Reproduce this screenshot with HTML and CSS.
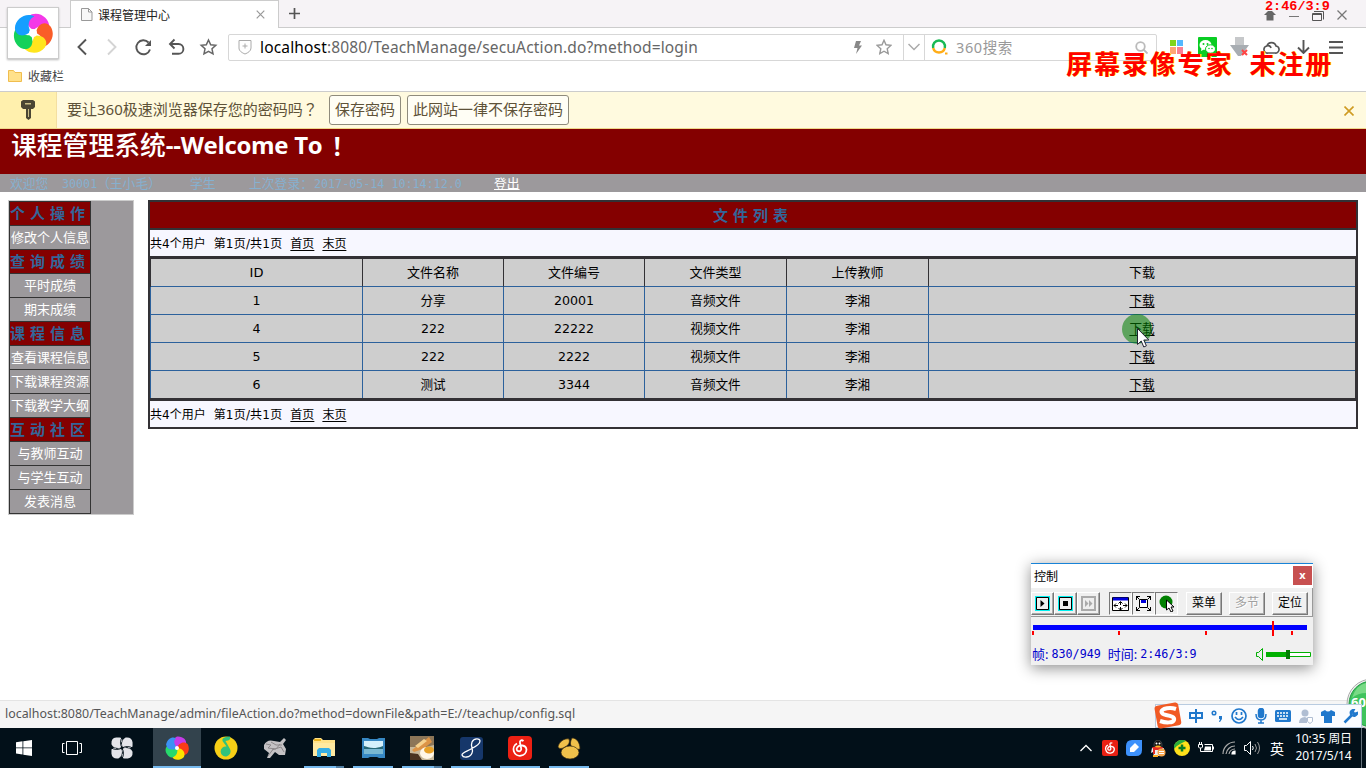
FILE: index.html
```html
<!DOCTYPE html>
<html lang="zh-CN">
<head>
<meta charset="utf-8">
<title>课程管理中心</title>
<link rel="stylesheet" href="styles.css">
</head>
<body>
<div class="screen">
  <header class="tabs">
    <div class="tab">
      <svg width="12" height="13" viewBox="0 0 12 13" fill="#f8f8f8" stroke="#999"><path d="M.5.5h7l3.500 3.500v8.500h-10.500zM7.500.5v3.500h3.500"/></svg>
      <span class="tab-title">课程管理中心</span>
      <svg width="9" height="9" viewBox="0 0 9 9" stroke="#999" stroke-width="1.200"><path d="M.7.7l7.600 7.600M8.300.7L.7 8.300"/></svg>
    </div>
    <svg class="new-tab" width="11" height="11" viewBox="0 0 11 11" stroke="#555" stroke-width="1.700"><path d="M5.500 0v11M0 5.500h11"/></svg>
    <div class="win-buttons">
      <svg width="12" height="11" viewBox="0 0 12 11" fill="#666"><path d="M4 1h4l4 4H9.500v5.500h-7V5H0z"/></svg>
      <svg width="10" height="11" viewBox="0 0 10 11" stroke="#777"><path d="M0 6.500h10"/></svg>
      <svg width="12" height="11" viewBox="0 0 12 11" fill="none" stroke="#555"><path d="M.5 3.500h9v7h-9zM.5 4.500h9M2 1.500h9.500v8"/></svg>
      <svg width="10" height="10" viewBox="0 0 10 10" stroke="#777" stroke-width="1.300"><path d="M.5.5l9 9M9.500.5l-9 9"/></svg>
    </div>
  </header>

  <div class="toolbar">
    <div class="nav">
      <svg width="29" height="20" viewBox="0 0 29 20" fill="none" stroke="#555" stroke-width="1.900"><path d="M18 2.500L10.500 10l7.500 7.500"/></svg>
      <svg width="30" height="20" viewBox="0 0 30 20" fill="none" stroke="#d4d4d4" stroke-width="1.900"><path d="M11 2.500l7.500 7.500-7.500 7.500"/></svg>
      <svg width="33" height="20" viewBox="0 0 33 20" fill="none" stroke="#555" stroke-width="1.900"><path d="M21.500 5.500a7 7 0 1 0 1.500 7"/><path d="M24 3v6h-6z" fill="#555" stroke="none"/></svg>
      <svg width="33" height="20" viewBox="0 0 33 20" fill="none" stroke="#555" stroke-width="1.900"><path d="M10 7h8.500a4.700 4.700 0 0 1 0 9.800H12M14.500 2.500L10 7l4.500 4.500"/></svg>
      <svg width="30" height="20" viewBox="0 0 30 20" fill="none" stroke="#666" stroke-width="1.500"><path d="M15.500 3l2.200 4.700 5.100.6-3.800 3.500 1 5-4.500-2.500-4.500 2.500 1-5-3.800-3.500 5.100-.6z"/></svg>
    </div>
    <div class="address">
      <svg width="14" height="16" viewBox="0 0 14 16" fill="none" stroke="#aaa"><path d="M1 1.500h12V9c0 3-3 4.800-6 6-3-1.200-6-3-6-6zM7 4.500v5M4.500 7h5"/></svg>
      <span class="url">localhost<i>:8080/TeachManage/secuAction.do?method=login</i></span>
      <svg class="bolt" width="8" height="13" viewBox="0 0 8 13" fill="#888"><path d="M2 0h5L5 4.500h3L2 13l1.500-6H0z"/></svg>
      <svg class="fav" width="16" height="16" viewBox="0 0 16 16" fill="none" stroke="#999" stroke-width="1.400"><path d="M8 1.300l2 4.500 4.900.6-3.700 3.300 1 4.900L8 12.200l-4.200 2.400 1-4.900L1.100 6.400 6 5.800z"/></svg>
      <div class="drop"><svg width="12" height="8" viewBox="0 0 12 8" fill="none" stroke="#aaa" stroke-width="1.500"><path d="M.5 1L6 6.500 11.500 1"/></svg></div>
      <svg width="17" height="16" viewBox="0 0 17 16" fill="none" stroke-width="2.500"><path d="M2.200 9A6 6 0 1 1 13.800 9" stroke="#19b955"/><path d="M2.200 9a6 6 0 0 0 11.600 0" stroke="#ffad18"/><path d="M14 14.500h2.500" stroke="#ffad18" stroke-width="2"/></svg>
      <span class="search">360搜索</span>
      <svg width="13" height="13" viewBox="0 0 13 13" fill="none" stroke="#bbb" stroke-width="1.800"><circle cx="5.500" cy="5.500" r="4.300"/><path d="M8.500 8.500l4 4"/></svg>
    </div>
    <div class="extensions">
      <svg width="13" height="14" viewBox="0 0 13 14"><path fill="#80d51d" d="M0 0h6v6H0z"/><path fill="#55b8ff" d="M7 0h6v6H7z"/><path fill="#ffa573" d="M0 7h6v7H0z"/><path fill="#fa7f92" d="M7 7h6v7H7z"/></svg>
      <svg width="19" height="20" viewBox="0 0 19 20"><rect width="19" height="20" rx="1" fill="#09cd23"/><ellipse cx="7.500" cy="8" rx="6" ry="5" fill="#fff"/><path d="M3.500 11l-.5 3 3-1.500z" fill="#fff"/><ellipse cx="12.500" cy="12" rx="5" ry="4.200" fill="#fff" stroke="#09cd23"/><g fill="#09cd23"><circle cx="5.500" cy="7" r="1"/><circle cx="9.500" cy="7" r="1"/><circle cx="11" cy="11.500" r=".8"/><circle cx="14" cy="11.500" r=".8"/></g></svg>
      <svg width="20" height="20" viewBox="0 0 20 20"><path d="M5 0h9v8h5l-8 11h-3L0 8h5z" fill="#a8adb2"/><path d="M5 0h9v8H5z" fill="#c6c8ca"/><path d="M12 13l5 5m0-5l-5 5" stroke="#f44" stroke-width="2"/></svg>
      <svg width="17" height="14" viewBox="0 0 17 14" fill="none" stroke="#555" stroke-width="1.700"><path d="M5 13a3.500 3.500 0 0 1-1-7 4.700 4.700 0 0 1 9 0 3.500 3.500 0 0 1-1 7zM3.500 6c2-1 4 0 4.500 2"/></svg>
      <svg width="13" height="14" viewBox="0 0 13 14" fill="none" stroke="#555" stroke-width="1.900"><path d="M6.500 0v13M1 7.500L6.500 13 12 7.500"/></svg>
      <svg width="14" height="14" viewBox="0 0 14 14" stroke="#555" stroke-width="2"><path d="M0 2h14M0 7.500h14M0 13h14"/></svg>
    </div>
  </div>

  <div class="bookmarks">
    <svg width="14" height="12" viewBox="0 0 14 12" fill="#ffe18b" stroke="#f0bd4e"><path d="M.5.5h5l1.500 2h6.500v9H.5z"/></svg>
    <span>收藏栏</span>
  </div>

  <div class="password-bar">
    <div class="key"><svg width="14" height="20" viewBox="0 0 14 20" fill="#4a4634"><path d="M2 0h10l2 1.500v5.500l-2 2H10v9l-2.500 2L5 18V9H2L0 7V1.500z"/><path d="M4 3h6v1.500H4zM7 9h1v8H7z" fill="#c9bd86"/></svg></div>
    <span class="question">要让360极速浏览器保存您的密码吗<i class="mid" lang="zh-TW">？</i></span>
    <span class="pw-button save">保存密码</span>
    <span class="pw-button never">此网站一律不保存密码</span>
    <svg class="dismiss" width="10" height="10" viewBox="0 0 10 10" stroke="#cf9b22" stroke-width="1.600"><path d="M.5.5l9 9M9.500.5l-9 9"/></svg>
  </div>

  <div class="banner"><span>课程管理系统</span><b>--Welcome To</b><b class="mid" lang="zh-TW">！</b></div>
  <div class="user-bar">
    <span class="hello">欢迎您</span><span class="user-id">30001</span><span class="user-name">（王小毛）</span><span class="role">学生</span><span class="last">上次登录：</span><span class="time">2017-05-14 10:14:12.0</span><a>登出</a>
  </div>

  <main class="content">
    <aside class="sidebar">
      <ul class="menu">
        <li class="group">个人操作</li>
        <li>修改个人信息</li>
        <li class="group">查询成绩</li>
        <li>平时成绩</li>
        <li>期末成绩</li>
        <li class="group">课程信息</li>
        <li>查看课程信息</li>
        <li>下载课程资源</li>
        <li>下载教学大纲</li>
        <li class="group">互动社区</li>
        <li>与教师互动</li>
        <li>与学生互动</li>
        <li>发表消息</li>
      </ul>
    </aside>
    <section class="files">
      <h2>文件列表</h2>
      <div class="pager"><span>共4个用户</span><span class="pages">第1页/共1页</span><a>首页</a><a>末页</a></div>
      <div class="grid">
        <div class="row head"><span>ID</span><span>文件名称</span><span>文件编号</span><span>文件类型</span><span>上传教师</span><span>下载</span></div>
        <div class="row"><span>1</span><span>分享</span><span>20001</span><span>音频文件</span><span>李湘</span><span><a>下载</a></span></div>
        <div class="row"><span>4</span><span>222</span><span>22222</span><span>视频文件</span><span>李湘</span><span><a>下载</a></span></div>
        <div class="row"><span>5</span><span>222</span><span>2222</span><span>视频文件</span><span>李湘</span><span><a>下载</a></span></div>
        <div class="row"><span>6</span><span>测试</span><span>3344</span><span>音频文件</span><span>李湘</span><span><a>下载</a></span></div>
      </div>
      <div class="pager"><span>共4个用户</span><span class="pages">第1页/共1页</span><a>首页</a><a>末页</a></div>
    </section>
  </main>

  <div class="status">localhost:8080/TeachManage/admin/fileAction.do?method=downFile&amp;path=E://teachup/config.sql</div>

  <footer class="taskbar">
    <div class="apps">
      <div class="app"><svg width="16" height="16" viewBox="0 0 16 16" fill="#fff"><path d="M0 2.200l6.500-.9v6.200H0zM7.300 1.200L16 0v7.500H7.300zM0 8.300h6.500v6.200L0 13.600zM7.300 8.300H16V16l-8.700-1.200z"/></svg></div>
      <div class="app view"><svg width="20" height="14" viewBox="0 0 20 14" fill="none" stroke="#fff"><path d="M4.500.5h11v13h-11zM2.500 2.500h-2v9h2M17.500 2.500h2v9h-2"/></svg></div>
      <div class="app"><svg width="22" height="22" viewBox="0 0 22 22" fill="none" stroke="#e4e5ea" stroke-width="5.500" stroke-linecap="round"><path d="M8.500 3.200H5.500Q3 3.500 3.200 6.500q1 2 4.800 1.700"/><path d="M8.500 3.200H5.500Q3 3.500 3.200 6.500q1 2 4.800 1.700" transform="rotate(90 11 11)"/><path d="M8.500 3.200H5.500Q3 3.500 3.200 6.500q1 2 4.800 1.700" transform="rotate(180 11 11)"/><path d="M8.500 3.200H5.500Q3 3.500 3.200 6.500q1 2 4.800 1.700" transform="rotate(270 11 11)"/><g stroke="#021019" stroke-width="1"><path d="M11 11Q8 6 11 0"/><path d="M11 11Q8 6 11 0" transform="rotate(90 11 11)"/><path d="M11 11Q8 6 11 0" transform="rotate(180 11 11)"/><path d="M11 11Q8 6 11 0" transform="rotate(270 11 11)"/></g></svg></div>
      <div class="app active"><svg width="24" height="24" viewBox="-12 -12 24 24"><path d="M0 0C-4-3-5-9 0-11.500 6-12 10-8 9-4 6-6 3-4 0 0z" fill="#c63be8"/><path d="M0 0C-4-3-5-9 0-11.500 6-12 10-8 9-4 6-6 3-4 0 0z" fill="#fb3b16" transform="rotate(72)"/><path d="M0 0C-4-3-5-9 0-11.500 6-12 10-8 9-4 6-6 3-4 0 0z" fill="#fce500" transform="rotate(144)"/><path d="M0 0C-4-3-5-9 0-11.500 6-12 10-8 9-4 6-6 3-4 0 0z" fill="#27d96c" transform="rotate(216)"/><path d="M0 0C-4-3-5-9 0-11.500 6-12 10-8 9-4 6-6 3-4 0 0z" fill="#3c91f5" transform="rotate(288)"/><circle r="2" fill="#fff"/></svg></div>
      <div class="app"><svg width="24" height="24" viewBox="0 0 24 24"><circle cx="12" cy="12" r="11.500" fill="#f7cf16"/><path d="M8.500 3Q10 .5 16 .5c1 3-1 4-4.500 4.500L16 13a5 5 0 1 1-3.500-2.500L8.500 5z" fill="#31c27c"/></svg></div>
      <div class="app"><svg width="24" height="22" viewBox="0 0 24 22"><path d="M1 8q3-6 10-4l6 1 4-4 2 2-3 4 3 5-1 6-6 0-4-3-5 6-3 0 2-5-5-4z" fill="#c4c2c4"/><path d="M3 7l5 1-3 3 8 1 4-5M8 5l5 3 6 0M9 13l9-3 3 5M5 19l6-8" stroke="#8d898b" fill="none"/></svg></div>
      <div class="app open two"><svg width="23" height="20" viewBox="0 0 23 20"><path d="M0 2L2 0h6l2 2h12v16H0z" fill="#ffe28a"/><path d="M0 5h22v13H0z" fill="#ffe9a1"/><path d="M1 1h7v2H1z" fill="#eab320"/><path d="M4 19v-7l2-2h10l2 2v7h-4v-4H8v4z" fill="#37aee5"/></svg></div>
      <div class="app open"><svg width="23" height="20" viewBox="0 0 23 20"><path d="M0 0h6l2 1h7l2-1h6v20h-6l-2-1H8l-2 1H0z" fill="#3788c4"/><path d="M2 3h19v13H2z" fill="#d5f1fc"/><path d="M2 8c4 1 9 4 19 0v4H2z" fill="#276978"/><path d="M2 11h19v5H2z" fill="#79b8d2"/></svg></div>
      <div class="app open two"><svg width="24" height="24" viewBox="0 0 24 24"><path d="M0 0h24v24H0z" fill="#c8b99b"/><path d="M0 0h24v9l-8 2H0z" fill="#8c7658"/><path d="M2 14L19 1l3 5-9 7-9 3z" fill="#dc9447"/><path d="M5 10l9-7 3 2-9 7z" fill="#f6d28e"/><path d="M0 17l8 1 4 6H0z" fill="#4b3421"/><ellipse cx="17" cy="17" rx="7" ry="6" fill="#fff7e8"/><ellipse cx="19" cy="14" rx="5" ry="3.500" fill="#e7a128"/></svg></div>
      <div class="app open"><svg width="23" height="23" viewBox="0 0 23 23"><rect width="23" height="23" rx="3" fill="#16376a"/><path d="M20 4c0-3-6-3-8 1-2 5 2 7 0 11-2 5-9 5-10 2 0-3 6-4 9-6 4-2 9-5 9-8z" fill="none" stroke="#fff" stroke-width="1.300"/></svg></div>
      <div class="app open"><svg width="24" height="24" viewBox="0 0 24 24"><rect width="24" height="24" rx="4" fill="#ec2013"/><path d="M15.500 5c-2-1.500-4-.5-3.500 2l1.200 5.500a2.300 2.300 0 1 1-4-1C11 8 18 9 18.500 13.500a6.500 6.500 0 1 1-9.500-6" fill="none" stroke="#fff" stroke-width="1.800"/></svg></div>
      <div class="app open"><svg width="25" height="23" viewBox="0 0 25 23" fill="#f0c14b" stroke="#382b13" stroke-width=".7"><path d="M1 10C2 5 7 1 12 2c1 3 0 6-4 8-3 2-6 2-7 0zM15 1c5 0 8 5 8 11-3 1-6 0-8-2s-2-5 0-9z"/><ellipse cx="13" cy="15.500" rx="9" ry="6.500"/></svg></div>
    </div>
    <div class="tray">
      <svg width="12" height="8" viewBox="0 0 12 8" fill="none" stroke="#fff" stroke-width="1.300"><path d="M.5 7L6 1.500 11.500 7"/></svg>
      <svg width="16" height="16" viewBox="0 0 24 24"><rect width="24" height="24" rx="3" fill="#e92013"/><path d="M15.500 5c-2-1.500-4-.5-3.500 2l1.200 5.500a2.300 2.300 0 1 1-4-1C11 8 18 9 18.500 13.500a6.500 6.500 0 1 1-9.500-6" fill="none" stroke="#fff" stroke-width="2"/></svg>
      <svg width="16" height="16" viewBox="0 0 16 16"><path d="M6 0h10v10q0 6-6 6H3q-3 0-3-3V6q0-6 6-6z" fill="#3d91fb"/><path d="M4 12V8l5-5 4 4-5 5z" fill="#fff"/></svg>
      <svg width="16" height="17" viewBox="0 0 16 17"><ellipse cx="8" cy="5" rx="4" ry="5" fill="#111" stroke="#777" stroke-width=".5"/><path d="M2 8l-1 5 2-1 1 4h7l3-8z" fill="#eee"/><path d="M2 7h11l-1 3H5v4H3V9z" fill="#e42c25"/><ellipse cx="8" cy="6.500" rx="3" ry="1" fill="#ffb422"/><circle cx="6.500" cy="3.500" r="1" fill="#fff"/><circle cx="9.500" cy="3.500" r="1" fill="#fff"/><circle cx="11.500" cy="12.500" r="4" fill="#f7a64c"/><path d="M9 11.500h5M9 13.500h5" stroke="#fff"/><path d="M3 15h5v2H3z" fill="#ffad1f"/></svg>
      <svg width="16" height="16" viewBox="0 0 16 16"><circle cx="8" cy="8" r="8" fill="#ffe11b"/><path d="M0 9A8 8 0 0 1 12 1C8 3 3 5 0 9z" fill="#29ae3b"/><path d="M8 4.500v7M4.500 8h7" stroke="#087c24" stroke-width="2.500"/></svg>
      <svg width="16" height="12" viewBox="0 0 16 12"><path d="M6.500 2.500h8v7H5.500" fill="none" stroke="#fff"/><path d="M7 4.500h6v4H6zM15 4.500h1v3h-1z" fill="#fff"/><path d="M.5 2.500h4V5L3.500 6h-2L.5 5zM1.500 0v2.500M3.500 0v2.500M2.500 6v3.500H6" fill="none" stroke="#fff"/></svg>
      <svg width="14" height="14" viewBox="0 0 14 14" fill="none" stroke="#aaa" stroke-width="1.200"><path d="M1 13A12 12 0 0 1 13 1M4 13a9 9 0 0 1 9-8M7 13a6 6 0 0 1 6-5"/><path d="M10 13a3 3 0 0 1 3-3v3z" fill="#fff" stroke="#fff"/></svg>
      <svg width="17" height="14" viewBox="0 0 17 14" fill="none" stroke="#fff"><path d="M.5 4.500h2l4-4v13l-4-4h-2zM8.500 5q1.500 2 0 4"/><path d="M11 3q3 4 0 8M13.500 1q4 6 0 12" stroke="#999"/></svg>
      <span class="lang">英</span>
      <div class="clock"><span>10:35 周日</span><span>2017/5/14</span></div>
      <i class="desktop-edge"></i>
    </div>
  </footer>

  <div class="logo"><svg width="42" height="42" viewBox="-21 -21 42 42"><defs><path id="petal" d="M0-3C-8-5-12-13-5-18 4-23 15-16 15-7 10-11 4-9 0-3z"/></defs><g transform="rotate(12)"><use href="#petal" fill="#f438e8"/><use href="#petal" fill="#fa5d28" transform="rotate(72)"/><use href="#petal" fill="#ffe51d" transform="rotate(144)"/><use href="#petal" fill="#13d15a" transform="rotate(216)"/><use href="#petal" fill="#159eff" transform="rotate(288)"/></g><circle r="4" fill="#fff"/></svg></div>

  <div class="watermark">屏幕录像专家<i></i>未注册</div>
  <div class="timer">2:46/3:9</div>

  <div class="click-spot"></div>
  <svg class="cursor" width="13" height="20" viewBox="0 0 13 20"><path d="M.5.5v16l3.700-3.500 2.600 6 2.600-1.200L6.800 12h5z" fill="#fff" stroke="#223"/></svg>

  <div class="recorder">
    <div class="rec-title"><span>控制</span><b>x</b></div>
    <div class="rec-tools">
      <div class="raised"><svg width="15" height="15" viewBox="0 0 15 15"><path d="M0 0h15v15H0z" fill="#00f0f0"/><path d="M1.500 1.500h12v12h-12z" fill="#eee" stroke="#000"/><path d="M5.500 4l4 3.500-4 3.500z"/></svg></div>
      <div class="raised"><svg width="15" height="15" viewBox="0 0 15 15"><path d="M0 0h15v15H0z" fill="#00f0f0"/><path d="M1.500 1.500h12v12h-12z" fill="#eee" stroke="#000"/><path d="M5 5h5v5H5z"/></svg></div>
      <div class="raised gap"><svg width="15" height="15" viewBox="0 0 15 15"><path d="M1 1h13v13H1z" fill="#eee" stroke="#aaa" stroke-width="2"/><path d="M4 4l3.500 3.500L4 11zM8 4l3.500 3.500L8 11z" fill="#aaa"/></svg></div>
      <div class="sunken"><svg width="17" height="14" viewBox="0 0 17 14" fill="none" stroke="#000"><path d="M.5.5h16v13H.5z" fill="#fff"/><path d="M1 2h15" stroke="#00d" stroke-width="3"/><path d="M8.500 5v3M8.500 10v3M2 8.500h4M11 8.500h4M6.500 6.500l2-2 2 2M6.500 11l2 2 2-2M4 6.500l-2 2 2 2M13 6.500l2 2-2 2"/></svg></div>
      <div class="sunken"><svg width="15" height="15" viewBox="0 0 15 15" fill="none" stroke="#000"><path d="M3.500 3.500h8v8h-8z" fill="#fff"/><path d="M5 5.500h5" stroke="#00d" stroke-width="3"/><path d="M0 0l3 3M15 0l-3 3M0 15l3-3M15 15l-3-3M.5 4V.5H4M11 .5h3.500V4M.5 11v3.500H4M11 14.500h3.500V11"/></svg></div>
      <div class="sunken gap"><svg width="16" height="17" viewBox="0 0 16 17"><circle cx="7" cy="7" r="6.500" fill="#008000"/><path d="M7.500 5v10l2.500-2 2 4 2-1-2-4h3z" fill="#fff" stroke="#000"/></svg></div>
      <div class="raised word">菜单</div>
      <div class="raised word off">多节</div>
      <div class="raised word">定位</div>
    </div>
    <svg class="track" width="282" height="20" viewBox="0 0 282 20"><path d="M2 6h274v5H2z" fill="#00f"/><path d="M1 12h2v4H1zM87 12h2v4h-2zM174 12h2v4h-2zM260 12h2v4h-2zM241 2h2v15h-2z" fill="#f00"/></svg>
    <div class="rec-status"><span class="frame">帧:</span><span class="count">830/949</span><span class="frame">时间:</span><span class="count">2:46/3:9</span>
      <svg width="56" height="13" viewBox="0 0 56 13" fill="none" stroke="#00b000"><path d="M1.500 4.500h2l4-4v12l-4-4h-2z"/><path d="M11.500 4.500h44v4h-44z" fill="#fff"/><path d="M11 4h22v5H11z" fill="#00b000" stroke="none"/><path d="M31 2h4v9h-4z" fill="#007c00" stroke="none"/></svg></div>
  </div>

  <svg class="ball" width="20" height="52" viewBox="0 0 20 52"><circle cx="26" cy="26" r="25" fill="#f2f2f2" stroke="#aaa"/><circle cx="26" cy="26" r="23" fill="#3fc35c" stroke="#279947"/><path d="M6 20q4-13 14-15v10q-8 0-14 5z" fill="#79da86"/></svg>
  <span class="ball-text">60</span>
  <div class="ime">
    <svg class="sogou" width="29" height="28" viewBox="0 0 29 28"><rect x="2" y="2" width="24" height="23" rx="3" fill="#f15a24" transform="rotate(-10 14 14)"/><path d="M22 7q-6-2-12 0c-4 2-3 5 2 6s9 2 8 5-8 3-14 1" fill="none" stroke="#fff" stroke-width="4"/></svg>
    <svg width="14" height="14" viewBox="0 0 14 14" fill="none" stroke="#2078cc" stroke-width="2"><path d="M1 4h12v5H1zM7 0v14"/></svg>
    <svg width="12" height="12" viewBox="0 0 12 12" fill="none" stroke="#2078cc" stroke-width="1.500"><circle cx="3" cy="3" r="1.800"/><path d="M8 6h3v3l-2 3H8l1-3H8z" fill="#2078cc" stroke="none"/></svg>
    <svg width="16" height="16" viewBox="0 0 16 16" fill="none" stroke="#2078cc" stroke-width="1.700"><circle cx="8" cy="8" r="7"/><path d="M4 9q4 5 8 0M5.500 4v3M10.500 4v3"/></svg>
    <svg width="12" height="16" viewBox="0 0 12 16" fill="none" stroke="#2078cc" stroke-width="1.500"><rect x="3.500" y=".5" width="5" height="9" rx="2.500" fill="#2078cc"/><path d="M1 6q0 6 5 6t5-6M6 12v3M3 15h6"/></svg>
    <svg width="16" height="12" viewBox="0 0 16 12"><rect width="16" height="12" rx="1.500" fill="#2078cc"/><path d="M2 3h12M2 6h12" stroke="#fff" stroke-width="1.500" stroke-dasharray="2 1"/><path d="M4 9h8" stroke="#fff" stroke-width="1.500"/></svg>
    <svg width="14" height="15" viewBox="0 0 14 15" fill="#b0bed3"><circle cx="6" cy="4" r="3.500"/><path d="M0 14q0-6 6-6l2 1v5z"/><path d="M8.500 8.500h5v4l-2.500 2-2.500-2z" fill="#fff" stroke="#b0bed3"/></svg>
    <svg width="14" height="13" viewBox="0 0 14 13" fill="#2078cc"><path d="M0 2l4-2q3 3 6 0l4 2v4h-3v7H3V6H0z"/></svg>
    <svg width="15" height="15" viewBox="0 0 15 15" fill="none" stroke="#2078cc" stroke-width="2.500"><path d="M1.500 13.500L9 6M10.500 1q-4 1-2 5 4 2 6-2l-3 1-2-2z"/></svg>
  </div>
</div>
</body>
</html>
```

FILE: styles.css
```css
* { box-sizing: border-box; }
body { margin: 0; font-family: "Noto Sans", "Noto Sans CJK SC", sans-serif; }
svg { display: block; flex: none; }
i { font-style: normal; }
.screen { position: relative; width: 1366px; height: 768px; overflow: hidden; display: flex; flex-direction: column; background: #fff; white-space: nowrap; }
.mid { font-family: "Noto Sans CJK TC", sans-serif; }

/* Browser chrome */
.tabs { height: 28px; flex: none; display: flex; background: #f6f3f6; border-bottom: 1px solid #ccc; padding-left: 70px; }
.tab { width: 209px; height: 28px; display: flex; align-items: center; background: #fff; border: 1px solid #ccc; border-bottom: 0; padding: 0 13px 0 10px; }
.tab-title { font-size: 12px; color: #222; margin-left: 5px; flex: 1; }
.new-tab { margin: 8px 0 0 10px; }
.win-buttons { margin-left: auto; display: flex; gap: 13px; padding: 10px 19px 0 0; }
.toolbar { height: 38px; flex: none; display: flex; align-items: center; padding-left: 68px; }
.nav { display: flex; width: 160px; flex: none; }
.address { width: 929px; flex: none; height: 27px; border: 1px solid #d7d7d7; border-radius: 2px; display: flex; align-items: center; padding: 0 8px 0 9px; }
.url { width: 601px; flex: none; padding-left: 8px; font-size: 15.500px; color: #000; line-height: 22px; letter-spacing: .16px; }
.url i { color: #666; }
.bolt { margin: 0 0 0 1px; }
.fav { margin: 0 11px 0 14px; }
.drop { width: 22px; flex: none; height: 25px; border: solid #d7d7d7; border-width: 0 1px; display: flex; align-items: center; justify-content: center; margin-right: 6px; }
.search { flex: 1; padding-left: 8px; font-size: 14.500px; color: #999; letter-spacing: .6px; line-height: 20px; padding-bottom: 1px; }
.extensions { display: flex; align-items: center; margin-left: 13px; gap: 15px; }
.extensions svg:nth-child(2) { margin-right: -2px; }
.extensions svg:nth-child(4) { margin-left: -2px; }
.extensions svg:nth-child(5) { margin: 0 4px 0 2px; }
.bookmarks { height: 26px; flex: none; display: flex; align-items: center; padding: 0 0 5px 8px; border-bottom: 1px solid #ccc; font-size: 12px; color: #444; gap: 6px; }
.password-bar { height: 37px; flex: none; display: flex; align-items: center; background: #fffadf; border-bottom: 1px solid #eed78b; color: #5e5238; font-size: 15px; }
.key { width: 57px; flex: none; height: 36px; background: #fff0ad; border-right: 1px solid #f4dfa0; display: flex; align-items: center; justify-content: center; }
.question { width: 272px; flex: none; padding-left: 10px; line-height: 20px; padding-bottom: 2px; }
.pw-button { height: 30px; flex: none; line-height: 27px; border: 1px solid #8f8b7c; border-radius: 3px; background: #fffef5; text-align: center; }
.save { width: 72px; }
.never { width: 162px; margin-left: 6px; }
.dismiss { margin: 1px 12px 0 auto; }

/* Course site */
.banner { height: 45px; flex: none; background: #840000; color: #fff; padding-left: 11px; display: flex; line-height: 32px; font-size: 25.800px; font-weight: 500; }
.banner b { font-family: "Open Sans", "Noto Sans CJK SC", sans-serif; font-size: 24px; letter-spacing: -.3px; }
.banner b.mid { font-family: "Noto Sans CJK TC", sans-serif; margin-left: 3px; }
.user-bar { height: 18px; flex: none; background: #9c999c; color: #86b0cf; font-size: 12.800px; line-height: 18px; display: flex; padding: 1px 0 0 10px; }
.user-bar span, .user-bar a { height: 17px; line-height: 17px; flex: none; }
.hello { width: 52px; }
.user-id { width: 35px; }
.user-bar .user-id, .user-bar .time { font-family: "DejaVu Sans Mono", monospace; font-size: 11.700px; line-height: 19px; }
.user-name { width: 93px; }
.role { width: 59px; }
.last { width: 65px; }
.time { width: 180px; }
.user-bar a { color: #fff; text-decoration: underline; text-underline-offset: 1px; }
.content { height: 508px; flex: none; padding: 8px; display: flex; align-items: flex-start; gap: 14px; }
.sidebar { width: 126px; height: 315px; background: #9c999c; border: 1px solid #ccc; }
.menu { width: 82px; margin: 0; padding: 0; list-style: none; border: 1px solid #333; border-bottom: 0; color: #fff; font-size: 13px; }
.menu li { height: 24px; border-bottom: 1px solid #333; line-height: 23px; text-align: center; }
.menu .group { background: #840000; color: #369; font-size: 15px; font-weight: 700; letter-spacing: 5px; text-align: left; }
.files { width: 1210px; height: 229px; border: 2px solid #333135; }
.files h2 { height: 28px; margin: 0; background: #840000; border-bottom: 2px solid #333135; color: #369; font-size: 15px; line-height: 26px; letter-spacing: 5px; text-align: center; }
.pager { height: 26px; background: #f7f7ff; font: 12px/28px "DejaVu Sans", "Noto Sans CJK SC", sans-serif; display: flex; gap: 8px; }
.pages { letter-spacing: .2px; }
.pager a, .row a { text-decoration: underline; text-underline-offset: 2px; }
.grid { border: solid #333135; border-width: 3px 1px; background: #cecece; }
.row { display: grid; grid-template-columns: 212px 141px 141px 142px 142px 426px; height: 28px; font: 12.600px/28px "DejaVu Sans", "Noto Sans CJK SC", sans-serif; text-align: center; }
.row span { height: 28px; border-right: 1px solid #2c619c; border-bottom: 1px solid #2c619c; }
.row.head span { border-right-color: #333135; font-size: 13px; line-height: 27px; }
.row span:last-child { border-right: 0; }
.row:last-child { height: 27px; }
.row:last-child span { height: 27px; border-bottom: 0; }
.row:not(.head) { box-shadow: -1px 0 #2c619c; }

.status { height: 28px; flex: none; background: #f5f5f5; border-top: 1px solid #e4e4e4; padding-left: 5px; color: #555; font-size: 12.420px; line-height: 26px; }
.taskbar { height: 40px; flex: none; background: #021019; display: flex; }
.apps { display: flex; gap: 1px; }
.app { width: 48px; height: 40px; display: flex; align-items: center; justify-content: center; }
.app.view { padding-right: 2px; }
.app.active { margin-left: 6px; background: #33434d; box-shadow: inset 0 -2px #76b9ed; }
.app.open { background: linear-gradient(#76b9ed, #76b9ed) 4px 38px / 40px 2px no-repeat; }
.app.two { background: linear-gradient(90deg, #76b9ed 32px, #517ea2 32px) 4px 38px / 40px 2px no-repeat; }
.tray { margin-left: auto; display: flex; align-items: center; gap: 8px; color: #fff; }
.tray svg:first-child { margin-right: 2px; }
.lang { width: 14px; font-size: 14px; margin-left: 1px; }
.clock { width: 59px; margin-left: 2px; display: flex; flex-direction: column; align-items: center; font-size: 12px; line-height: 17px; letter-spacing: -.1px; padding-bottom: 2px; }
.desktop-edge { width: 5px; height: 40px; border-left: 1px solid #65717a; }

/* Items floating over the desktop */
.logo { position: absolute; left: 7px; top: 7px; width: 52px; height: 52px; background: #fff; border: 1px solid #ccc; box-shadow: 0 1px 2px #bbb; display: flex; align-items: center; justify-content: center; }
.watermark { position: absolute; left: 1066px; top: 43px; color: #f00; font: 700 26px/40px "Noto Sans CJK SC", sans-serif; letter-spacing: 1.900px; display: flex; text-shadow: 1px 0 #ff0; }
.watermark i { width: 16px; }
.timer { position: absolute; left: 1265px; top: -1px; color: #f00; font: 700 13.500px/16px "Liberation Mono", monospace; }
.click-spot { position: absolute; left: 1122px; top: 314px; width: 30px; height: 30px; border-radius: 50%; background: rgba(0, 128, 0, .55); }
.cursor { position: absolute; left: 1137px; top: 328px; }
.recorder { position: absolute; left: 1031px; top: 563px; width: 282px; height: 102px; background: #f0f0f0; border-top: 1px solid #1883d7; box-shadow: 0 3px 14px rgba(0, 0, 0, .45); font-size: 12px; }
.rec-title { height: 24px; background: #fff; padding: 0 1px 1px 3px; display: flex; align-items: center; justify-content: space-between; }
.rec-title b { width: 19px; height: 19px; background: #c75050; color: #fff; font-size: 11px; line-height: 17px; text-align: center; }
.rec-tools { height: 29px; border: 1px solid #999; border-width: 0 1px 1px 0; padding: 4px 0 0; display: flex; }
.raised, .sunken { width: 23px; height: 23px; flex: none; display: flex; align-items: center; justify-content: center; border: 1px solid; }
.raised { border-color: #fff #777 #777 #fff; box-shadow: inset -1px -1px #aaa; }
.sunken { border-color: #777 #fff #fff #777; }
.gap { margin-right: 9px; }
.gap + .word { margin-left: -1px; }
.word { width: 36px; margin-right: 7px; line-height: 18px; padding-bottom: 2px; }
.off { color: #a0a0a0; text-shadow: 1px 1px #fff; }
.track { margin-top: 2px; }
.rec-status { display: flex; align-items: center; height: 26px; padding: 4px 0 0 1px; color: #00c; font-size: 13px; }
.frame { line-height: 18px; }
.count { font-family: "DejaVu Sans Mono", monospace; font-size: 11.700px; line-height: 18px; margin: 0 7px 0 3px; }
.rec-status svg { margin: 1px 2px 0 auto; }
.ball { position: absolute; right: 0; top: 678px; }
.ball-text { position: absolute; left: 1351px; top: 693px; color: #fff; font-size: 13px; font-weight: 700; }
.ime { position: absolute; left: 1155px; top: 704px; width: 207px; height: 24px; border: 1px solid #b8cbe0; background: #fafcff; display: flex; align-items: center; gap: 8px; }
.sogou { margin: 0 -2px 0 -2px; }
```
